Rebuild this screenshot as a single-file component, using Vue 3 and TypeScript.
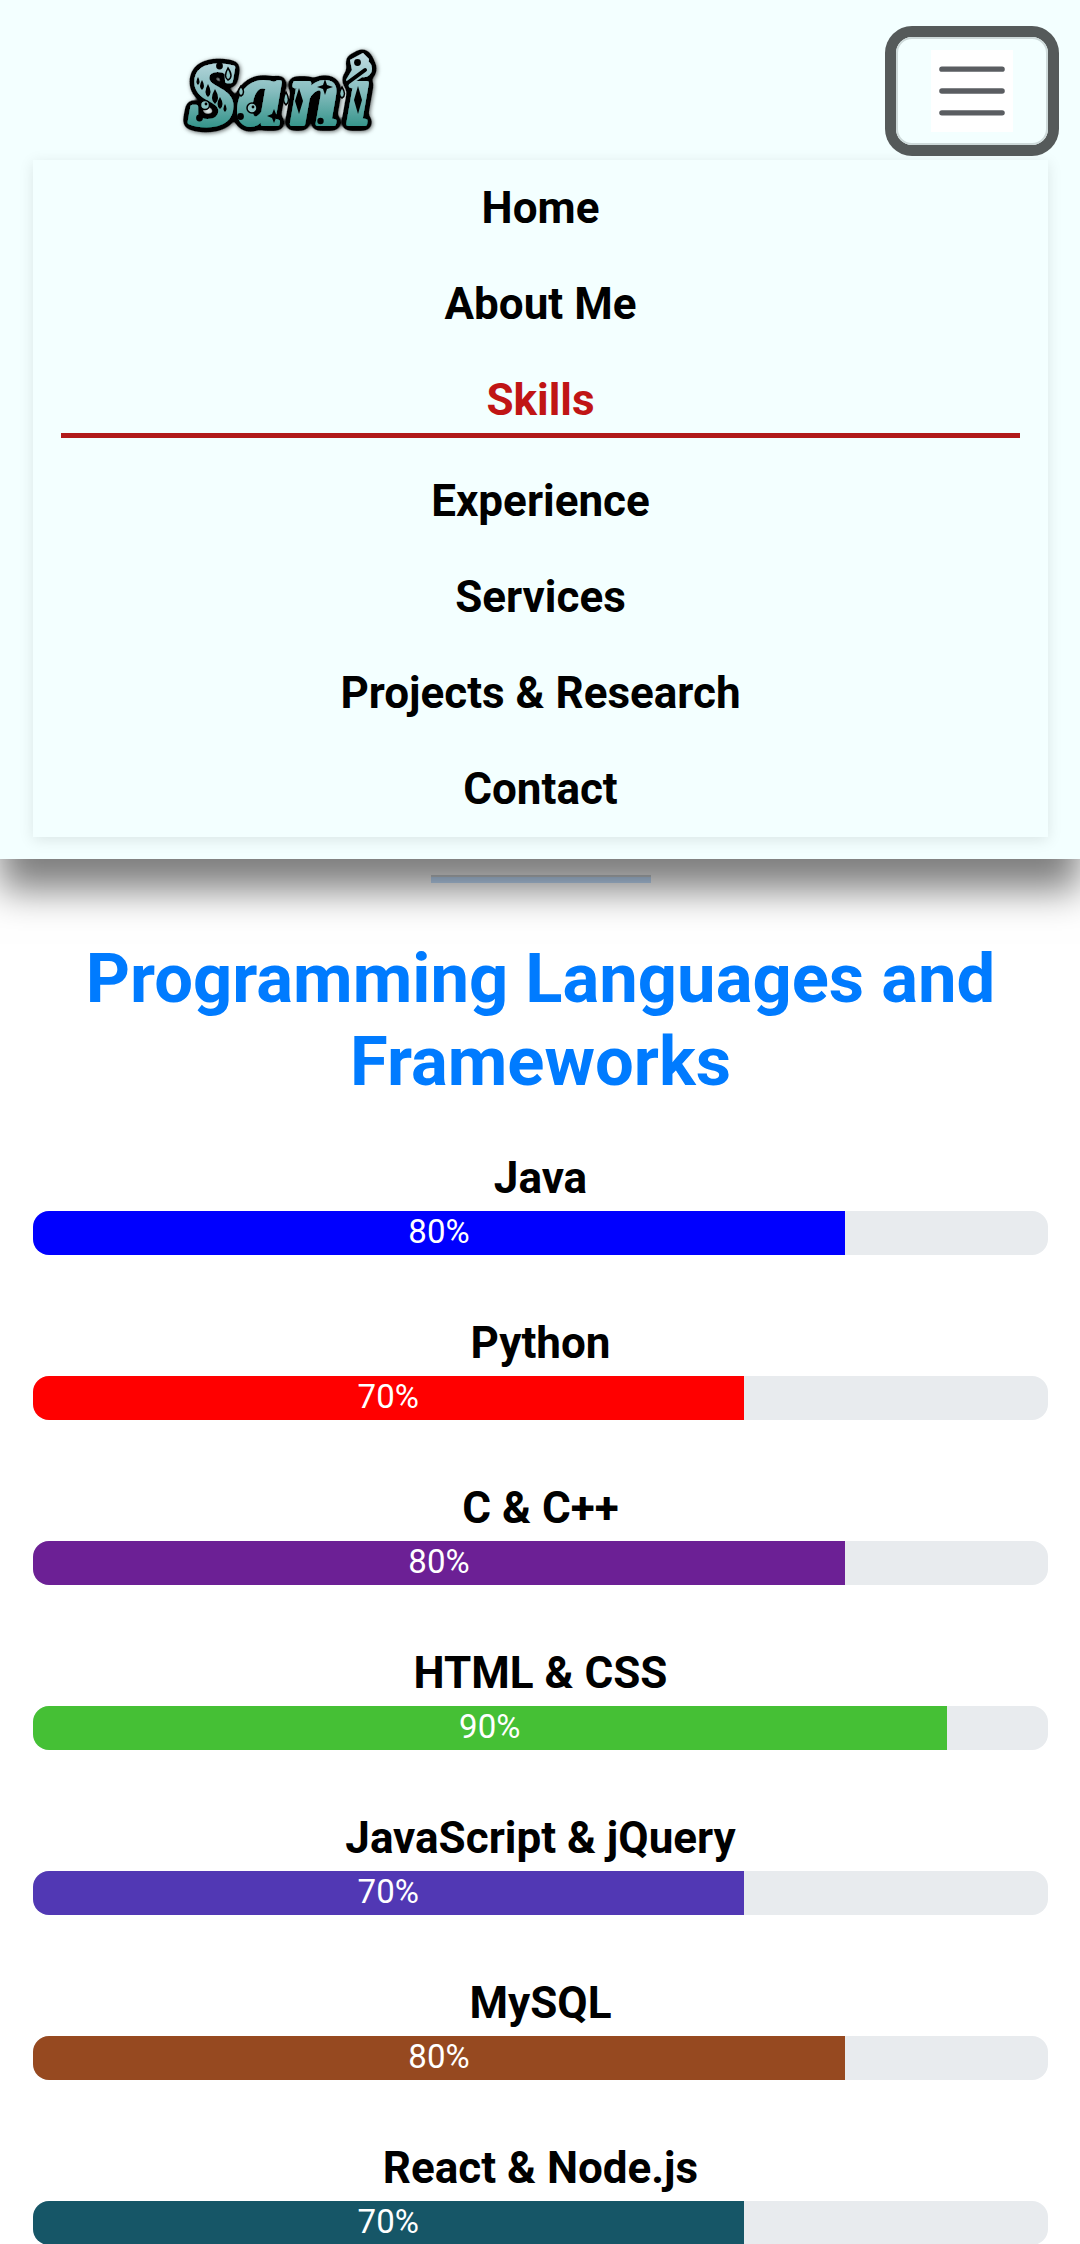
<script setup lang="ts">
interface Skill {
  name: string
  level: number
  color: string
}

const links: string[] = ['Home', 'About Me', 'Skills', 'Experience', 'Services', 'Projects & Research', 'Contact']
const current = 'Skills'

const skills: Skill[] = [
  { name: 'Java', level: 80, color: '#0000ff' },
  { name: 'Python', level: 70, color: '#ff0000' },
  { name: 'C & C++', level: 80, color: '#6c2095' },
  { name: 'HTML & CSS', level: 90, color: '#45c035' },
  { name: 'JavaScript & jQuery', level: 70, color: '#5138b4' },
  { name: 'MySQL', level: 80, color: '#964920' },
  { name: 'React & Node.js', level: 70, color: '#165667' },
]
</script>

<template>
  <div class="page">
    <header class="header">
      <div class="topbar">
        <svg class="logo" viewBox="170 30 220 130" aria-label="Sani">
          <defs>
            <linearGradient id="teal" gradientUnits="userSpaceOnUse" x1="0" y1="52" x2="0" y2="130">
              <stop offset="0" stop-color="#c3dde3" />
              <stop offset="0.5" stop-color="#86bdbf" />
              <stop offset="1" stop-color="#2f9186" />
            </linearGradient>
            <filter id="outline" filterUnits="userSpaceOnUse" x="170" y="30" width="220" height="130">
              <feGaussianBlur in="SourceAlpha" stdDeviation="3.1" result="soft" />
              <feComponentTransfer in="soft" result="edge">
                <feFuncA type="linear" slope="22" intercept="-0.9" />
              </feComponentTransfer>
              <feDropShadow in="edge" dx="1" dy="1" stdDeviation="2.2" flood-color="#000" flood-opacity="0.6" result="base" />
              <feMerge>
                <feMergeNode in="base" />
                <feMergeNode in="SourceGraphic" />
              </feMerge>
            </filter>
          </defs>
          <g filter="url(#outline)">
            <text class="wordmark" y="124" x="188 238 290 346">Sani</text>
            <path d="M350 60L363 53L369 59L367 74L350 85L346 80L352 70Z" fill="url(#teal)" />
          </g>
          <g fill="#000">
            <circle cx="219.500" cy="66" r="3.400" />
            <circle cx="199.500" cy="118" r="3.400" />
            <circle cx="240.500" cy="116.500" r="3.400" />
            <circle cx="320.500" cy="121" r="3.200" />
            <circle cx="357.500" cy="62.500" r="3.400" />
            <path d="M198 77q3 5 0 8q-3-3 0-8zM202 80q4 7 0 10q-4-3 0-10zM208 84q5 9 0 13q-5-4 0-13zM215 89q6 10 0 15q-6-5 0-15zM220 97q5 8 0 12q-5-4 0-12zM225 104q3 5 0 8q-3-3 0-8z" />
            <path d="M274 109l2 5 5 2-5 2-2 5-2-5-5-2 5-2zM325 79l2 6 6 2-6 2-2 6-2-6-6-2 6-2z" />
            <path d="M299 88l4 13-4 13-4-13zM358 86l4 14-4 14-4-14z" />
          </g>
          <path d="M346 84L365 70" stroke="#000" stroke-width="4" stroke-linecap="round" />
          <g fill="#8bc2c2" stroke="#000" stroke-width="1.500">
            <circle cx="205" cy="105" r="4.500" />
            <circle cx="252" cy="108" r="5" />
            <path d="M228 68q6 9 0 12q-5-3 0-12zM241 86q5 7 0 10q-5-3 0-10zM286 92q5 9 0 13q-5-4 0-13zM342 87q5 8 0 11q-5-3 0-11z" />
          </g>
          <circle cx="206" cy="104" r="1.400" fill="#000" />
          <circle cx="253" cy="107" r="1.400" fill="#000" />
        </svg>
        <button class="toggler" type="button" aria-label="Toggle navigation">
          <svg class="bars" viewBox="0 0 30 30">
            <path stroke="#5a5d61" stroke-linecap="round" stroke-width="2" d="M4 7h22M4 15h22M4 23h22" />
          </svg>
        </button>
      </div>
      <nav class="menu">
        <a v-for="link in links" :key="link" class="link" :class="{ active: link === current }">
          <span class="label">{{ link }}</span>
        </a>
      </nav>
    </header>
    <main class="content">
      <div class="rule"></div>
      <h2 class="title">Programming Languages and Frameworks</h2>
      <section v-for="skill in skills" :key="skill.name" class="skill">
        <div class="name">{{ skill.name }}</div>
        <div class="track">
          <div class="fill" :style="{ width: skill.level + '%', backgroundColor: skill.color }">{{ skill.level }}%</div>
        </div>
      </section>
    </main>
  </div>
</template>

<style>
body {
  margin: 0;
  background: #fff;
}
</style>

<style scoped>
.page {
  width: 1080px;
  height: 2244px;
  overflow: hidden;
  background: #fff;
  font-family: Roboto, "Liberation Sans", sans-serif;
  color: #000;
}
.header {
  position: relative;
  z-index: 1;
  box-sizing: border-box;
  height: 859px;
  padding: 0 32px 22px 33px;
  background: #f3ffff;
  box-shadow: 0 31px 36px rgba(0, 0, 0, 0.51);
}
.topbar {
  display: flex;
  align-items: flex-start;
  justify-content: space-between;
  height: 160px;
}
.logo {
  width: 220px;
  height: 130px;
  margin: 30px 0 0 137px;
}
.wordmark {
  font-family: "Liberation Serif", serif;
  font-size: 88px;
  font-style: italic;
  font-weight: bold;
  fill: url(#teal);
  stroke: url(#teal);
  stroke-width: 4px;
  stroke-linejoin: round;
}
.toggler {
  display: flex;
  align-items: center;
  justify-content: center;
  box-sizing: border-box;
  width: 152px;
  height: 108px;
  margin: 37px 0 0;
  padding: 0;
  border: 2px solid #cedada;
  border-radius: 16px;
  background: transparent;
  box-shadow: 0 0 0 11px #555a5a;
}
.bars {
  width: 82px;
  height: 82px;
  background: #fff;
}
.menu {
  display: flex;
  flex-direction: column;
  height: 677px;
  box-shadow: 0 3px 14px rgba(0, 0, 0, 0.1);
}
.link {
  display: block;
  padding: 15px 28px;
}
.label {
  display: block;
  font-size: 44px;
  font-weight: 700;
  line-height: 66px;
  text-align: center;
}
.active .label {
  color: #c01515;
  border-bottom: 5px solid #b11a1a;
}
.content {
  padding: 16px 32px 0 33px;
}
.rule {
  box-sizing: border-box;
  width: 220px;
  height: 8px;
  margin: 0 auto 55px;
  border-top: 2px solid #d0d4d8;
  background: #c6e1ff;
}
.title {
  margin: 0 0 42px;
  color: #007bff;
  font-size: 68.75px;
  font-weight: 700;
  line-height: 82.5px;
  text-align: center;
}
.skill {
  margin-bottom: 55px;
}
.name {
  font-size: 44px;
  font-weight: 700;
  line-height: 66px;
  text-align: center;
}
.track {
  height: 44px;
  overflow: hidden;
  border-radius: 16px;
  background: #e8ebee;
}
.fill {
  height: 44px;
  color: #fff;
  font-size: 33px;
  line-height: 41px;
  text-align: center;
}
</style>
